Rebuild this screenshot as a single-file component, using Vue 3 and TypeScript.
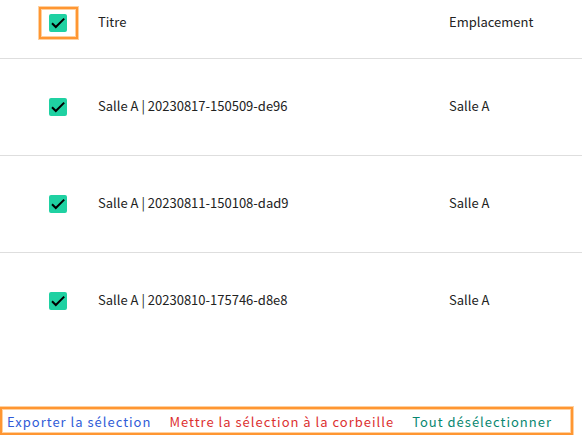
<script setup lang="ts">
import { computed, ref } from 'vue'

interface Recording {
  id: number
  title: string
  location: string
}

const recordings: Recording[] = [
  { id: 1, title: 'Salle A | 20230817-150509-de96', location: 'Salle A' },
  { id: 2, title: 'Salle A | 20230811-150108-dad9', location: 'Salle A' },
  { id: 3, title: 'Salle A | 20230810-175746-d8e8', location: 'Salle A' },
]

const selected = ref<number[]>(recordings.map((r) => r.id))

const allSelected = computed<boolean>({
  get: () => selected.value.length === recordings.length,
  set: (on) => {
    selected.value = on ? recordings.map((r) => r.id) : []
  },
})
</script>

<template>
  <main class="page">
    <table class="list">
      <thead>
        <tr>
          <th class="pick" scope="col">
            <label class="check framed">
              <input v-model="allSelected" type="checkbox" aria-label="Tout" />
              <svg viewBox="0 0 18 18" aria-hidden="true"><path d="M3 9.2 6.8 13 15.2 4.6" /></svg>
            </label>
          </th>
          <th class="title" scope="col">Titre</th>
          <th scope="col">Emplacement</th>
        </tr>
      </thead>
      <tbody>
        <tr v-for="r in recordings" :key="r.id">
          <td class="pick">
            <label class="check">
              <input v-model="selected" type="checkbox" :value="r.id" :aria-label="r.title" />
              <svg viewBox="0 0 18 18" aria-hidden="true"><path d="M3 9.2 6.8 13 15.2 4.6" /></svg>
            </label>
          </td>
          <td>{{ r.title }}</td>
          <td>{{ r.location }}</td>
        </tr>
      </tbody>
    </table>
    <footer class="actions framed">
      <button type="button" class="export">Exporter la sélection</button>
      <button type="button" class="trash">Mettre la sélection à la corbeille</button>
      <button type="button" class="clear" @click="allSelected = false">Tout désélectionner</button>
    </footer>
  </main>
</template>

<style>
body {
  background: #fff;
}
</style>

<style scoped>
.page {
  font-family: "Noto Sans CJK SC", "Noto Sans", sans-serif;
  font-size: 13px;
  line-height: 20px;
  color: #222;
}

.list {
  width: 100%;
  table-layout: fixed;
  border-collapse: separate;
  border-spacing: 0;
}

th,
td {
  box-sizing: border-box;
  height: 97px;
  padding: 0 0 2px;
  border-bottom: 1px solid #dedede;
  font-weight: 400;
  text-align: left;
  vertical-align: middle;
}

th {
  height: 59px;
  padding-bottom: 14px;
}

tbody tr:last-child td {
  border-bottom-color: transparent;
}

.pick {
  width: 98px;
  padding: 0 0 0 39px;
}

th.pick {
  padding-bottom: 12px;
}

.title {
  width: 351px;
}

.check {
  display: grid;
  box-sizing: border-box;
  width: 39px;
  height: 32px;
  padding-right: 1px;
  place-content: center;
}

.check input,
.check svg {
  grid-area: 1 / 1;
  width: 18px;
  height: 18px;
  margin: 0;
}

.check input {
  appearance: none;
  box-sizing: border-box;
  border: 2px solid #777;
  border-radius: 2px;
}

.check input:checked {
  border-color: #1fd1a2;
  background: #1fd1a2;
}

.check svg {
  visibility: hidden;
  fill: none;
  stroke: #000;
  stroke-width: 2;
  pointer-events: none;
}

.check input:checked + svg {
  visibility: visible;
}

.framed {
  border: 2px solid #ff9632;
  box-shadow: 0 0 0 1px #ffd1a0, inset 0 0 0 1px #ffd1a0;
}

.actions {
  display: flex;
  gap: 18px;
  margin: 57px 9px 0 0;
  padding: 3px 5px 1px;
}

button {
  padding: 0;
  border: 0;
  background: none;
  font: inherit;
  letter-spacing: 1px;
  white-space: nowrap;
  cursor: pointer;
}

.export {
  color: #2f5bd7;
}

.trash {
  color: #dc3030;
}

.clear {
  color: #078770;
}
</style>
